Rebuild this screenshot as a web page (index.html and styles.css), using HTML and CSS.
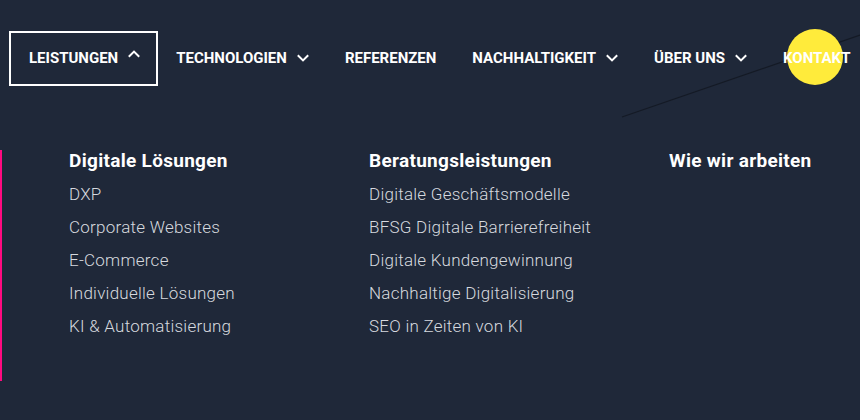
FILE: index.html
```html
<!DOCTYPE html>
<html lang="de">
<head>
<meta charset="utf-8">
<title>Navigation</title>
<link rel="stylesheet" href="styles.css">
</head>
<body>
<div class="page">
  <svg class="deco-line" width="860" height="420" viewBox="0 0 860 420" aria-hidden="true">
    <line x1="622" y1="117" x2="860" y2="35" stroke="#141a25" stroke-width="1.2"/>
  </svg>
  <header class="header">
    <nav class="nav">
      <a class="nav-item is-active" href="#"><span>LEISTUNGEN</span><svg class="chev chev-up" width="12" height="8" viewBox="0 0 12 8"><path d="M0.8 6.8 L6 1.6 L11.2 6.8" fill="none" stroke="#fff" stroke-width="2"/></svg></a>
      <a class="nav-item" href="#"><span>TECHNOLOGIEN</span><svg class="chev" width="12" height="8" viewBox="0 0 12 8"><path d="M0.8 1.2 L6 6.4 L11.2 1.2" fill="none" stroke="#fff" stroke-width="2"/></svg></a>
      <a class="nav-item" href="#"><span>REFERENZEN</span></a>
      <a class="nav-item" href="#"><span>NACHHALTIGKEIT</span><svg class="chev" width="12" height="8" viewBox="0 0 12 8"><path d="M0.8 1.2 L6 6.4 L11.2 1.2" fill="none" stroke="#fff" stroke-width="2"/></svg></a>
      <a class="nav-item" href="#"><span>ÜBER UNS</span><svg class="chev" width="12" height="8" viewBox="0 0 12 8"><path d="M0.8 1.2 L6 6.4 L11.2 1.2" fill="none" stroke="#fff" stroke-width="2"/></svg></a>
      <a class="nav-item nav-contact" href="#"><span class="contact-label">KONTAKT</span></a>
    </nav>
  </header>
  <section class="mega">
    <div class="mega-col">
      <h3 class="mega-title">Digitale Lösungen</h3>
      <ul class="mega-list">
        <li>DXP</li>
        <li>Corporate Websites</li>
        <li>E-Commerce</li>
        <li>Individuelle Lösungen</li>
        <li>KI &amp; Automatisierung</li>
      </ul>
    </div>
    <div class="mega-col">
      <h3 class="mega-title">Beratungsleistungen</h3>
      <ul class="mega-list">
        <li>Digitale Geschäftsmodelle</li>
        <li>BFSG Digitale Barrierefreiheit</li>
        <li>Digitale Kundengewinnung</li>
        <li>Nachhaltige Digitalisierung</li>
        <li>SEO in Zeiten von KI</li>
      </ul>
    </div>
    <div class="mega-col">
      <h3 class="mega-title">Wie wir arbeiten</h3>
    </div>
  </section>
</div>
</body>
</html>
```
FILE: styles.css
```css
* { box-sizing: border-box; }
html, body {
  margin: 0;
  padding: 0;
  background: #1f2839;
}
body {
  width: 860px;
  height: 420px;
  overflow: hidden;
  font-family: Roboto, "Liberation Sans", Arial, sans-serif;
  color: #fff;
}
.page {
  position: relative;
  height: 420px;
  overflow: hidden;
}
.deco-line {
  position: absolute;
  top: 0;
  left: 0;
  z-index: 0;
}
.header {
  position: relative;
  z-index: 1;
  padding: 31px 0 0 9px;
  overflow: hidden;
}
.nav {
  display: flex;
  align-items: stretch;
}
.nav-item {
  display: flex;
  align-items: center;
  gap: 10px;
  height: 55px;
  padding: 0 16px 2px;
  border: 2px solid transparent;
  color: #fff;
  text-decoration: none;
  font-weight: 700;
  font-size: 15px;
  white-space: nowrap;
  flex: none;
}
.nav-item.is-active {
  border-color: #fff;
  padding-left: 18px;
}
.chev {
  display: block;
  margin-top: 1px;
}
.chev-up {
  margin-top: -7px;
}
.nav-contact {
  position: relative;
  padding-right: 0;
}
.nav-contact::before {
  content: "";
  position: absolute;
  width: 56px;
  height: 56px;
  border-radius: 50%;
  background: #ffeb3b;
  left: 20px;
  top: -4px;
  z-index: 0;
}
.contact-label {
  position: relative;
  z-index: 1;
}
.mega {
  position: relative;
  z-index: 1;
  display: flex;
  margin-top: 64px;
  height: 231px;
  border-left: 2px solid #ff0a80;
  padding-left: 67px;
}
.mega-col {
  width: 300px;
  flex: none;
}
.mega-title {
  margin: 0 0 6px;
  font-size: 19px;
  line-height: 22px;
  font-weight: 700;
  letter-spacing: 0.3px;
  color: #fff;
}
.mega-list {
  list-style: none;
  margin: 0;
  padding: 0;
}
.mega-list li {
  font-size: 17px;
  line-height: 33px;
  font-weight: 300;
  letter-spacing: 0.25px;
  color: #d6d9df;
}
```
